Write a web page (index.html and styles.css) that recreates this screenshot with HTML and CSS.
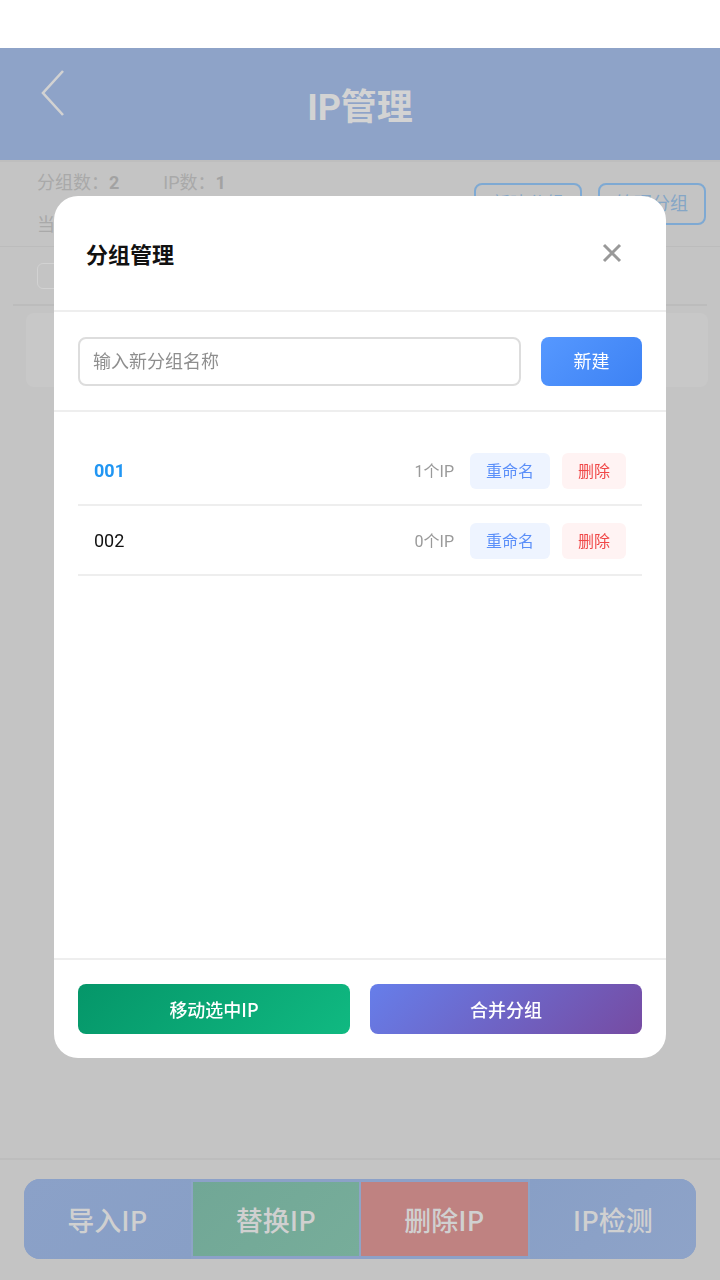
FILE: index.html
```html
<!DOCTYPE html>
<html lang="zh-CN">

<head>
    <meta charset="UTF-8">
    <title>IP管理</title>
    <link rel="stylesheet" href="styles.css">
</head>
<body>
    <div class="status"></div>
    <div class="page">
        <div class="header">
            <svg class="back" width="30" height="50" viewBox="0 0 30 50">
                <polyline points="23,3 3,25 23,47" fill="none" stroke="#d2d2d2" stroke-width="2.6"/>
            </svg>
            <h1>IP管理</h1>
        </div>
        <div class="stats">
            <div class="stats-text">
                <p><span>分组数：<b>2</b></span><span class="gap">IP数：<b>1</b></span></p>
                <p>当前分组：001</p>
            </div>
            <div class="stats-btns">
                <a href="javascript:;">新建分组</a>
                <a href="javascript:;">管理分组</a>
            </div>
        </div>
        <div class="filter">
            <span class="select"></span>
        </div>
        <div class="card"></div>
        <div class="spacer"></div>
        <div class="footer">
            <div class="bar">
                <a href="javascript:;" class="b-blue">导入IP</a>
                <a href="javascript:;" class="b-green">替换IP</a>
                <a href="javascript:;" class="b-red">删除IP</a>
                <a href="javascript:;" class="b-blue2">IP检测</a>
            </div>
        </div>
    </div>

    <div class="mask">
        <div class="modal">
            <div class="modal-head">
                <h3>分组管理</h3>
                <svg class="close" width="20" height="20" viewBox="0 0 20 20">
                    <path d="M2 2L18 18M18 2L2 18" stroke="#999" stroke-width="3"/>
                </svg>
            </div>
            <div class="modal-add">
                <div class="input">输入新分组名称</div>
                <a href="javascript:;" class="btn-new">新建</a>
            </div>
            <div class="group-list">
                <div class="row">
                    <span class="name active">001</span>
                    <span class="count">1个IP</span>
                    <a href="javascript:;" class="rename">重命名</a>
                    <a href="javascript:;" class="del">删除</a>
                </div>
                <div class="row">
                    <span class="name">002</span>
                    <span class="count">0个IP</span>
                    <a href="javascript:;" class="rename">重命名</a>
                    <a href="javascript:;" class="del">删除</a>
                </div>
            </div>
            <div class="modal-foot">
                <a href="javascript:;" class="btn-move">移动选中IP</a>
                <a href="javascript:;" class="btn-merge">合并分组</a>
            </div>
        </div>
    </div>
</body>
</html>
```

FILE: styles.css
```css
* {
    margin: 0;
    padding: 0;
    box-sizing: border-box;
}
a {
    text-decoration: none;
}
body {
    width: 720px;
    height: 1280px;
    overflow: hidden;
    font-family: Roboto, "Noto Sans CJK SC", sans-serif;
    background-color: #c4c4c4;
}
.status {
    height: 48px;
    background-color: #fff;
}
.page {
    height: 1232px;
    display: flex;
    flex-direction: column;
    background-color: #c4c4c4;
}
.header {
    height: 112px;
    background-color: #8ea3c8;
    display: flex;
    align-items: center;
    justify-content: center;
    position: relative;
}
.header .back {
    position: absolute;
    left: 40px;
    top: 20px;
}
.header h1 {
    font-size: 36px;
    font-weight: bold;
    color: #d3d3d3;
}
.stats {
    height: 87px;
    border-top: 2px solid #bebebe;
    border-bottom: 1px solid #bcbcbc;
    padding: 0 14px 0 37px;
    display: flex;
    justify-content: space-between;
    align-items: center;
}
.stats-text {
    font-size: 18px;
    color: #a9a9a9;
    line-height: 42px;
}
.stats-text b {
    color: #a2a2a2;
}
.stats-text .gap {
    margin-left: 44px;
}
.stats-btns {
    display: flex;
    gap: 16px;
}
.stats-btns a {
    width: 108px;
    height: 42px;
    line-height: 38px;
    text-align: center;
    border: 2px solid #7ea9d3;
    border-radius: 8px;
    font-size: 18px;
    color: #85a6c6;
}
.filter {
    height: 59px;
    margin: 0 13px;
    border-bottom: 2px solid #bcbcbc;
    padding: 16px 24px;
}
.filter .select {
    display: block;
    width: 120px;
    height: 26px;
    border: 1px solid #d2d2d2;
    border-radius: 6px;
}
.card {
    height: 74px;
    margin: 7px 12px 0 26px;
    background-color: #c8c8c8;
    border-radius: 8px;
}
.spacer {
    flex: 1;
}
.footer {
    height: 122px;
    border-top: 2px solid #bdbdbd;
    padding: 19px 24px 0;
}
.bar {
    display: flex;
    height: 80px;
    border-radius: 16px;
    overflow: hidden;
    background-color: #8ca1c8;
}
.bar a {
    flex: 1;
    display: flex;
    align-items: center;
    justify-content: center;
    font-family: "Noto Sans CJK SC", sans-serif;
    font-size: 27px;
    font-weight: 500;
    color: #d0d0d0;
    border-left: 2px solid #8ea4c7;
}
.bar a:first-child {
    border-left: 0;
}
.bar .b-blue {
    background: linear-gradient(135deg, #8ba1c8, #889fc6);
}
.bar .b-green {
    background: linear-gradient(135deg, #71a796, #77ad9a);
    margin-top: 3px;
    margin-bottom: 3px;
}
.bar .b-red {
    background-color: #bf8281;
    margin-top: 3px;
    margin-bottom: 3px;
}
.bar .b-blue2 {
    background: linear-gradient(135deg, #889fc6, #8ea3c8);
}

.mask {
    position: fixed;
    left: 0;
    top: 0;
    width: 720px;
    height: 1280px;
    padding-top: 196px;
    display: flex;
    justify-content: center;
    align-items: flex-start;
}
.modal {
    width: 612px;
    height: 862px;
    background-color: #fff;
    border-radius: 24px;
    display: flex;
    flex-direction: column;
}
.modal-head {
    height: 116px;
    padding: 0 44px 0 32px;
    border-bottom: 2px solid #eee;
    display: flex;
    justify-content: space-between;
    align-items: center;
}
.modal-head h3 {
    font-size: 22px;
    font-weight: bold;
    color: #111;
}
.modal-add {
    padding: 25px 24px 24px;
    border-bottom: 2px solid #eee;
    display: flex;
    gap: 20px;
}
.modal-add .input {
    flex: 1;
    height: 49px;
    border: 2px solid #ddd;
    border-radius: 8px;
    padding: 0 13px;
    line-height: 45px;
    font-size: 18px;
    color: #8e8e8e;
}
.btn-new {
    width: 101px;
    height: 49px;
    line-height: 49px;
    text-align: center;
    border-radius: 8px;
    background: linear-gradient(135deg, #5698ff, #3d82f4);
    color: #fff;
    font-size: 18px;
}
.group-list {
    flex: 1;
    padding: 24px 24px 0;
}
.group-list .row {
    height: 70px;
    border-bottom: 2px solid #eee;
    padding: 0 16px;
    display: flex;
    align-items: center;
}
.row .name {
    flex: 1;
    font-size: 18px;
    color: #111;
}
.row .name.active {
    color: #2196f3;
    font-weight: bold;
}
.row .count {
    font-size: 16px;
    color: #9a9a9a;
    margin-right: 16px;
}
.row a {
    height: 36px;
    line-height: 38px;
    margin-top: 2px;
    text-align: center;
    border-radius: 6px;
    font-size: 16px;
}
.row .rename {
    width: 80px;
    background-color: #eef4ff;
    color: #5b8ff9;
    margin-right: 12px;
}
.row .del {
    width: 64px;
    background-color: #fff3f3;
    color: #f04848;
}
.modal-foot {
    border-top: 2px solid #eee;
    padding: 24px;
    display: flex;
    gap: 20px;
}
.modal-foot a {
    flex: 1;
    height: 50px;
    line-height: 50px;
    text-align: center;
    border-radius: 8px;
    color: #fff;
    font-family: "Noto Sans CJK SC", sans-serif;
    font-size: 18px;
    font-weight: 500;
}
.btn-move {
    background: linear-gradient(135deg, #059669, #10b981);
}
.btn-merge {
    background: linear-gradient(135deg, #667eea, #764ba2);
}
```
